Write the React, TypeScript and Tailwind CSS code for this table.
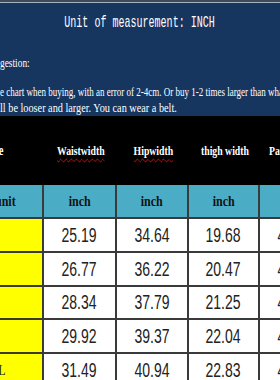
import React from "react";

const serif = { fontFamily: '"Liberation Serif", "Times New Roman", serif' };
const mono = { fontFamily: '"Liberation Mono", "Courier New", monospace' };
const sans = { fontFamily: '"Liberation Sans", Arial, sans-serif' };

const rows = [
  { size: "S", v: ["25.19", "34.64", "19.68", "41.34"], h: "h-[34px]" },
  { size: "M", v: ["26.77", "36.22", "20.47", "41.73"], h: "h-[34px]" },
  { size: "L", v: ["28.34", "37.79", "21.25", "42.13"], h: "h-[33px]" },
  { size: "XL", v: ["29.92", "39.37", "22.04", "42.52"], h: "h-[34px]" },
  { size: "XXL", v: ["31.49", "40.94", "22.83", "42.91"], h: "h-[34px]" },
];

const widths = ["w-[44px]", "w-[73px]", "w-[72px]", "w-[71px]", "w-[72px]"];

export default function App() {
  return (
    <div className="w-[280px] h-[380px] overflow-hidden bg-black">
      {/* top frame */}
      <div className="h-[2px] bg-[#3c4a5e]" />
      <div className="h-[1px] bg-[#a9b1bf]" />
      {/* navy banner */}
      <div className="h-[113px] bg-[#163660] text-white flex flex-col">
        <div className="h-[40px] shrink-0 flex items-center justify-center pb-[1px]">
          <span
            className="inline-block whitespace-nowrap text-[17px] scale-x-[0.59] origin-center"
            style={mono}
          >
            Unit of measurement: INCH
          </span>
        </div>
        <div className="h-[40px] shrink-0 flex items-center overflow-hidden pt-[1px]">
          <span
            className="inline-block whitespace-nowrap text-[12.5px] scale-x-[0.75] origin-left"
            style={serif}
          >
            gestion:
          </span>
        </div>
        <div className="h-[17px] shrink-0 flex items-center overflow-hidden pt-[2px]">
          <span
            className="inline-block whitespace-nowrap text-[12.5px] scale-x-[0.72] origin-left"
            style={serif}
          >
            e chart when buying, with an error of 2-4cm. Or buy 1-2 times larger than what you usually wear
          </span>
        </div>
        <div className="h-[16px] shrink-0 flex items-center overflow-hidden pt-[1px]">
          <span
            className="inline-block whitespace-nowrap text-[12.5px] scale-x-[0.82] origin-left"
            style={serif}
          >
            ll be looser and larger. You can wear a belt.
          </span>
        </div>
      </div>

      {/* header row (black) */}
      <div className="flex h-[69px] bg-black text-white" style={serif}>
        <div className={`${widths[0]} shrink-0 flex items-center overflow-hidden pb-[1px]`}>
          <span className="inline-block whitespace-nowrap text-[14px] font-bold scale-x-[0.75] origin-left -ml-[6px]">
            ze
          </span>
        </div>
        <div className={`${widths[1]} shrink-0 flex items-center justify-center`}>
          <span className="inline-block whitespace-nowrap text-[13px] font-bold scale-x-[0.75] underline decoration-wavy decoration-[#d01010] decoration-1 underline-offset-[3px]">
            Waistwidth
          </span>
        </div>
        <div className={`${widths[2]} shrink-0 flex items-center justify-center`}>
          <span className="inline-block whitespace-nowrap text-[13px] font-bold scale-x-[0.75] underline decoration-wavy decoration-[#d01010] decoration-1 underline-offset-[3px]">
            Hipwidth
          </span>
        </div>
        <div className={`${widths[3]} shrink-0 flex items-center justify-center`}>
          <span className="inline-block whitespace-nowrap text-[13px] font-bold scale-x-[0.75]">
            thigh width
          </span>
        </div>
        <div className={`${widths[4]} shrink-0 flex items-center overflow-hidden pl-[9px]`}>
          <span className="inline-block whitespace-nowrap text-[13px] font-bold scale-x-[0.75] origin-left">
            Pants length
          </span>
        </div>
      </div>

      {/* unit row */}
      <div className="flex h-[34px] bg-[#4bacc6] text-[#111]" style={serif}>
        {["unit", "inch", "inch", "inch", "inch"].map((t, i) => (
          <div
            key={i}
            className={`${widths[i]} shrink-0 border-r-2 border-b-2 border-[#3a3a3a] flex items-center overflow-hidden ${
              i === 0 ? "" : "justify-center"
            }`}
          >
            <span
              className={`inline-block whitespace-nowrap text-[15px] font-bold scale-x-[0.8] ${
                i === 0 ? "origin-left -ml-[5px]" : i === 4 ? "ml-[30px]" : ""
              }`}
            >
              {t}
            </span>
          </div>
        ))}
      </div>

      {/* data rows */}
      {rows.map((r, ri) => (
        <div key={ri} className={`flex ${r.h} bg-white text-[#222]`}>
          <div
            className={`${widths[0]} shrink-0 bg-[#ffff00] border-r-2 border-b-2 border-[#3a3a3a] flex items-center overflow-hidden`}
          >
            <span
              className={`inline-block whitespace-nowrap text-[15px] scale-x-[0.8] origin-left ${
                r.size === "XL" ? "-ml-[16px]" : r.size === "XXL" ? "-ml-[19px]" : "-ml-[30px]"
              }`}
              style={serif}
            >
              {r.size}
            </span>
          </div>
          {r.v.map((v, vi) => (
            <div
              key={vi}
              className={`${widths[vi + 1]} shrink-0 border-r-2 border-b-2 border-[#3a3a3a] flex items-center justify-center overflow-hidden`}
            >
              <span
                className="inline-block whitespace-nowrap text-[20px] scale-x-[0.7] pb-[1px]"
                style={sans}
              >
                {v}
              </span>
            </div>
          ))}
        </div>
      ))}
    </div>
  );
}
